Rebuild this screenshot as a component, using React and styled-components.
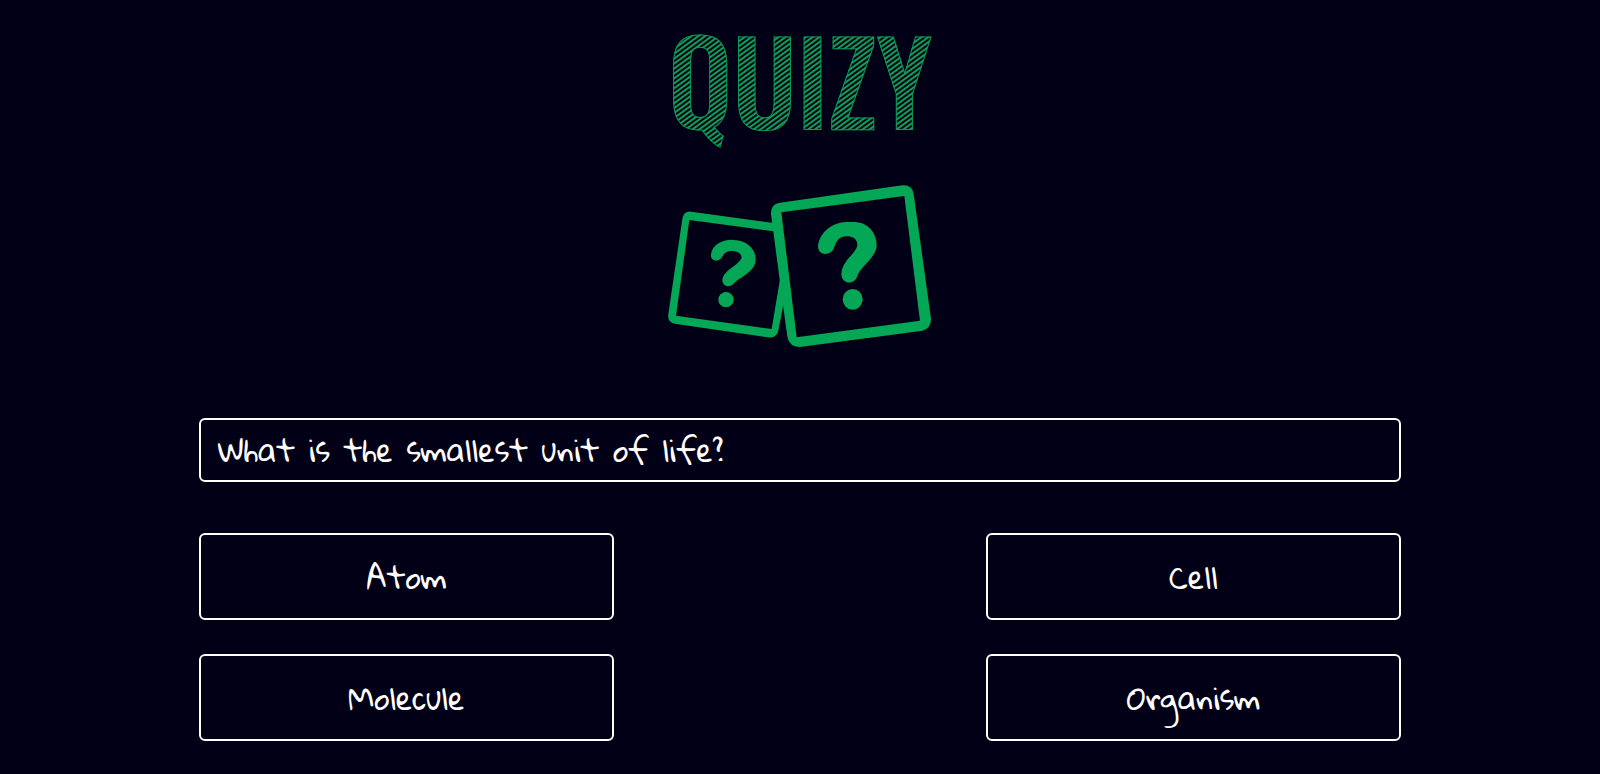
import React from "react";
import styled, { createGlobalStyle } from "styled-components";

const night = "#020016";
const green = "#04a756";

const GlobalStyle = createGlobalStyle`
  *, *::before, *::after { box-sizing: border-box; }
  body { margin: 0; background: ${night}; color: #fff; }
`;

const Page = styled.div`
  display: flex;
  flex-direction: column;
  align-items: center;
  padding: 4px 0 32px;
  font-family: "Gloria Hallelujah", "Comic Neue", "Lato", sans-serif;
`;

const Title = styled.h1`
  margin: 0;
  padding: 0 8px;
  font-family: "Oswald", "Roboto Condensed", "Liberation Sans", sans-serif;
  font-size: 114px;
  line-height: 148px;
  font-weight: 500;
  color: transparent;
  -webkit-text-stroke: 1px #0b9a55;
  background: repeating-linear-gradient(144deg, #0ca057 0 1px, ${night} 2px 3px, #0ca057 4px);
  background-clip: text;
  -webkit-background-clip: text;
`;

const Cards = styled.svg`
  display: block;
  width: 300px;
  height: 190px;
  margin-top: 18px;
`;

const Quiz = styled.main`
  width: calc(75% + 2px);
  margin-top: 58px;
`;

const Question = styled.h2`
  margin: 0;
  padding: 0 17px;
  border: 2px solid #fff;
  border-radius: 6px;
  font-size: 30px;
  line-height: 60px;
  font-weight: 400;
`;

const Answers = styled.div`
  display: grid;
  grid-template-columns: 415px 415px;
  justify-content: space-between;
  gap: 34px 16px;
  margin-top: 51px;

  @media (max-width: 1200px) {
    grid-template-columns: 1fr 1fr;
  }
`;

const Answer = styled.button`
  height: 87px;
  padding: 0 16px;
  border: 2px solid #fff;
  border-radius: 6px;
  background: transparent;
  color: #fff;
  font-family: inherit;
  font-size: 30px;
  line-height: 60px;
  cursor: pointer;
`;

const options = ["Atom", "Cell", "Molecule", "Organism"];

function QuestionCards() {
  return (
    <Cards viewBox="0 0 900 570" aria-hidden="true">
      <g fill={green}>
        <path d="M97 147Q101 122 124 125L400 163L414 330L386 478Q381 507 354 502L74 461Q51 456 55 432Z" />
        <path fill={night} d="M118 150L413 190L365 477L78 437Z" />
        <path d="M183 252C187 225 215 209 245 209C290 210 317 235 317 268C317 305 275 318 252 340C240 355 217 350 217 330C220 300 270 285 275 262C272 245 255 242 240 243C222 245 220 258 212 266C200 278 180 270 183 252Z" />
        <circle cx="228" cy="389" r="23" />
        <path d="M363 133Q361 102 390 98L757 46Q787 44 791 72L843 446Q844 475 817 482L450 531Q419 532 412 502Z" />
        <path fill={night} d="M394 127L763 78L810 452L440 502Z" />
        <path fill={night} d="M399 430L412 502L417 520L396 500L386 478Z" />
        <path d="M504 228C508 190 545 156 590 156L615 156C655 158 680 190 680 225C680 262 630 290 622 318C615 345 575 345 574 312C576 270 620 250 622 225C622 205 605 199 592 199C560 199 558 222 550 238C540 258 504 258 504 228Z" />
        <ellipse cx="608" cy="388" rx="30" ry="31" />
      </g>
    </Cards>
  );
}

export default function App() {
  return (
    <>
      <GlobalStyle />
      <Page>
        <Title>QUIZY</Title>
        <QuestionCards />
        <Quiz>
          <Question>What is the smallest unit of life?</Question>
          <Answers>
            {options.map((option) => (
              <Answer key={option} type="button">{option}</Answer>
            ))}
          </Answers>
        </Quiz>
      </Page>
    </>
  );
}
